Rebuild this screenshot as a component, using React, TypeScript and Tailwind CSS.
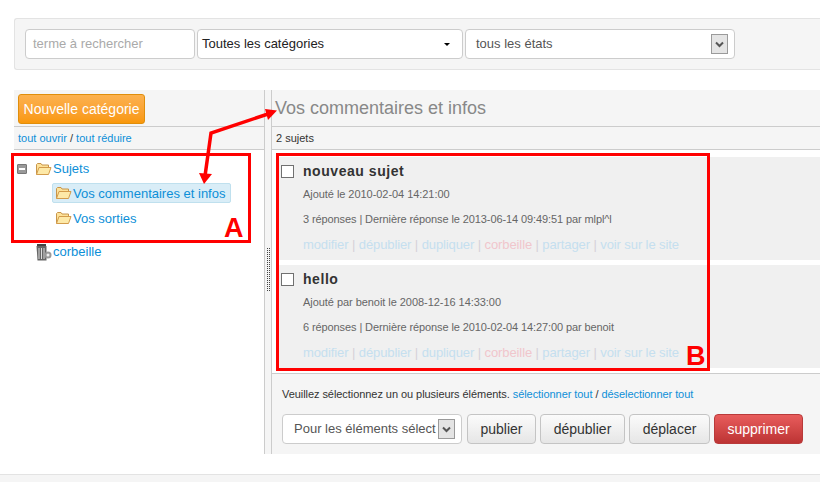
import React from 'react'

const Folder = () => (
  <svg width="17" height="14" viewBox="0 0 17 14" className="shrink-0">
    <path d="M1.5 12.5V2.5L2.5 1.5H6L7 3H13.5V5.5" fill="#fde29a" stroke="#c8954a" />
    <path d="M1.5 12.5L4 5.5H16L13.5 12.5Z" fill="#fde9a8" stroke="#d39c4c" />
  </svg>
)

const Trash = () => (
  <svg width="16" height="17" viewBox="0 0 16 17" className="shrink-0">
    <rect x="1" y="0" width="9" height="2" fill="#444" />
    <path d="M0.5 2H10.5V16.5H1.5Z" fill="#666" />
    <path d="M3 4V15M5.5 4V15M8 4V15" stroke="#ddd" strokeWidth="1" />
    <circle cx="12" cy="11" r="3.5" fill="#999" />
    <circle cx="12" cy="11" r="1.5" fill="#eee" />
  </svg>
)

const SelectArrow = () => (
  <span className="flex h-[20px] w-[17px] shrink-0 items-center justify-center border border-[#9a9a9a] bg-[#e4e4e4]">
    <svg width="9" height="7" viewBox="0 0 9 7">
      <path d="M1 1.5L4.5 5L8 1.5" fill="none" stroke="#555" strokeWidth="2" />
    </svg>
  </span>
)

const Sep = () => <span className="text-[#d6d0d8]">|</span>

const Item = ({ title, added, replies }: { title: string; added: string; replies: string }) => (
  <div className="flex h-[103px] bg-[#f0f0f0] pl-[5px] pt-[7px]">
    <span className="mt-[1px] h-[13px] w-[13px] shrink-0 border border-[#707070] bg-white" />
    <div className="ml-[9px] flex flex-col">
      <div className="h-[16px] text-[14px] font-bold leading-[14px] tracking-[0.55px] text-[#333]">{title}</div>
      <div className="mt-[8px] h-[25px] text-[11px] leading-[12px] tracking-[-0.05px] text-[#666]">{added}</div>
      <div className="h-[25px] text-[11px] leading-[12px] tracking-[-0.1px] text-[#666]">{replies}</div>
      <div className="whitespace-nowrap text-[13px] leading-[14px] tracking-[-0.1px] text-[#c5dfef]">
        modifier <Sep /> dépublier <Sep /> dupliquer <Sep /> <span className="text-[#f0c6cc]">corbeille</span> <Sep /> partager <Sep /> voir sur le site
      </div>
    </div>
  </div>
)

const GrayButton = ({ label, width }: { label: string; width: string }) => (
  <button className={`flex h-[30px] items-center justify-center rounded-[4px] border border-[#c4c4c4] bg-gradient-to-b from-[#fbfbfb] to-[#e6e6e6] text-[14px] text-[#333] ${width}`}>
    {label}
  </button>
)

export default function App() {
  return (
    <div className="relative h-[482px] w-[820px] overflow-hidden bg-white font-['Liberation_Sans',Arial,sans-serif]">
      <div className="pl-[14px] pt-[18px]">
        {/* filtres */}
        <div className="flex h-[52px] items-center gap-[2px] rounded-l-[3px] border border-r-0 border-[#e3e3e3] bg-[#f5f5f5] pl-[10px]">
          <div className="flex h-[30px] w-[170px] items-center rounded-[4px] border border-[#ccc] bg-white pl-[7px] text-[13px] text-[#aaa]">
            terme à rechercher
          </div>
          <div className="flex h-[30px] w-[266px] items-center justify-between rounded-[4px] border border-[#ccc] bg-white pl-[4px] pr-[12px] text-[13px] text-[#222]">
            Toutes les catégories
            <span className="h-0 w-0 border-x-[3px] border-t-[3px] border-x-transparent border-t-black" />
          </div>
          <div className="flex h-[30px] w-[270px] items-center justify-between rounded-[4px] border border-[#ccc] bg-white pl-[10px] pr-[6px] text-[13px] text-[#555]">
            tous les états
            <SelectArrow />
          </div>
        </div>

        <div className="mt-[20px] flex h-[364px]">
          {/* arbre */}
          <div className="w-[250px] shrink-0">
            <div className="h-[37px] border-b border-[#ccc] bg-[#f5f5f5] pl-[4px] pt-[4px]">
              <button className="h-[30px] w-[127px] whitespace-nowrap rounded-[3px] border border-[#e08e0b] bg-gradient-to-b from-[#fcb14e] to-[#f99807] text-center text-[14px] text-white">
                Nouvelle catégorie
              </button>
            </div>
            <div className="h-[23px] border-b border-[#ccc] bg-[#f5f5f5] pl-[4px] text-[11px] leading-[22px] text-[#333]">
              <a className="text-[#0d8fd8]">tout ouvrir</a> / <a className="text-[#0d8fd8]">tout réduire</a>
            </div>
            <div className="pl-[3px] pt-[10px] text-[13px] text-[#0d8fd8]">
              <div className="flex h-[17px] items-center">
                <span className="flex h-[10px] w-[10px] items-center justify-center rounded-[1px] border border-[#777] bg-[#999]">
                  <span className="h-[2px] w-[6px] bg-white" />
                </span>
                <span className="ml-[8px]"><Folder /></span>
                <span className="ml-[1px]">Sujets</span>
              </div>
              <div className="ml-[35px] mt-[6px] flex h-[20px] w-[179px] items-center gap-[1px] rounded-[2px] border border-[#bfe0ee] bg-[#d9edf7] pl-[2px]">
                <Folder />
                <span className="pt-[1px]">Vos commentaires et infos</span>
              </div>
              <div className="ml-[35px] mt-[5px] flex h-[20px] items-center gap-[1px] pl-[3px]">
                <Folder />
                <span className="pt-[1px]">Vos sorties</span>
              </div>
              <div className="ml-[19px] mt-[14px] flex h-[20px] items-center gap-[1px]">
                <Trash />
                corbeille
              </div>
            </div>
          </div>

          {/* séparateur */}
          <div className="flex h-full w-[8px] shrink-0 items-center justify-center border-x border-[#ccc] bg-[#f5f5f5]">
            <div className="mt-[-5px] h-[44px] w-[5px] bg-[conic-gradient(#444_0_25%,transparent_0)] bg-[length:2px_2px]" />
          </div>

          {/* contenu */}
          <div className="flex min-w-0 flex-1 flex-col">
            <div className="h-[37px] border-b border-[#ccc] bg-[#f5f5f5] pl-[3px] text-[18px] leading-[36px] text-[#888]">
              Vos commentaires et infos
            </div>
            <div className="h-[23px] border-b border-[#ccc] bg-[#f5f5f5] pl-[4px] text-[11px] leading-[22px] text-[#333]">
              2 sujets
            </div>
            <div className="flex h-[223px] flex-col gap-[5px] pl-[4px] pt-[7px]">
              <Item
                title="nouveau sujet"
                added="Ajouté le 2010-02-04 14:21:00"
                replies="3 réponses | Dernière réponse le 2013-06-14 09:49:51 par mlpl^l"
              />
              <Item
                title="hello"
                added="Ajouté par benoit le 2008-12-16 14:33:00"
                replies="6 réponses | Dernière réponse le 2010-02-04 14:27:00 par benoit"
              />
            </div>
            <div className="flex-1 border-t border-[#ccc] bg-[#f5f5f5] pl-[10px] pt-[14px]">
              <div className="text-[11px] leading-[12px] tracking-[-0.06px] text-[#333]">
                Veuillez sélectionnez un ou plusieurs éléments. <a className="text-[#0d8fd8]">sélectionner tout</a> / <a className="text-[#0d8fd8]">déselectionner tout</a>
              </div>
              <div className="mt-[14px] flex h-[30px] items-center gap-[4px]">
                <div className="mr-[1px] flex h-[30px] w-[180px] items-center rounded-[4px] border border-[#ccc] bg-white pl-[11px] text-[13px] text-[#555]">
                  <span className="w-[144px] whitespace-nowrap">Pour les éléments sélect</span>
                  <SelectArrow />
                </div>
                <GrayButton label="publier" width="w-[69px]" />
                <GrayButton label="dépublier" width="w-[85px]" />
                <GrayButton label="déplacer" width="w-[81px]" />
                <button className="flex h-[30px] w-[89px] items-center justify-center rounded-[4px] border border-[#b93a3a] bg-gradient-to-b from-[#e85c5c] to-[#bd3434] text-[14px] text-white">
                  supprimer
                </button>
              </div>
            </div>
          </div>
        </div>
      </div>

      <div className="mt-[20px] h-[8px] border-t border-[#e3e3e3] bg-[#f5f5f5]" />

      {/* annotations */}
      <div className="absolute left-[11px] top-[153px] h-[90px] w-[240px] border-[3px] border-[#f00]" />
      <div className="absolute left-[276px] top-[153px] h-[218px] w-[434px] border-[3px] border-[#f00]" />
      <div className="absolute left-[224px] top-[215px] text-[27px] font-bold leading-[27px] text-[#f00]">A</div>
      <div className="absolute left-[686px] top-[343px] text-[27px] font-bold leading-[27px] text-[#f00]">B</div>
      <svg width="820" height="482" className="pointer-events-none absolute left-0 top-0">
        <path d="M268 114L211 133L205 176" fill="none" stroke="#f00" strokeWidth="3.5" />
        <path d="M277 110.5L265 109L268 120Z" fill="#f00" />
        <path d="M204 184L199 173L212 174Z" fill="#f00" />
      </svg>
    </div>
  )
}
